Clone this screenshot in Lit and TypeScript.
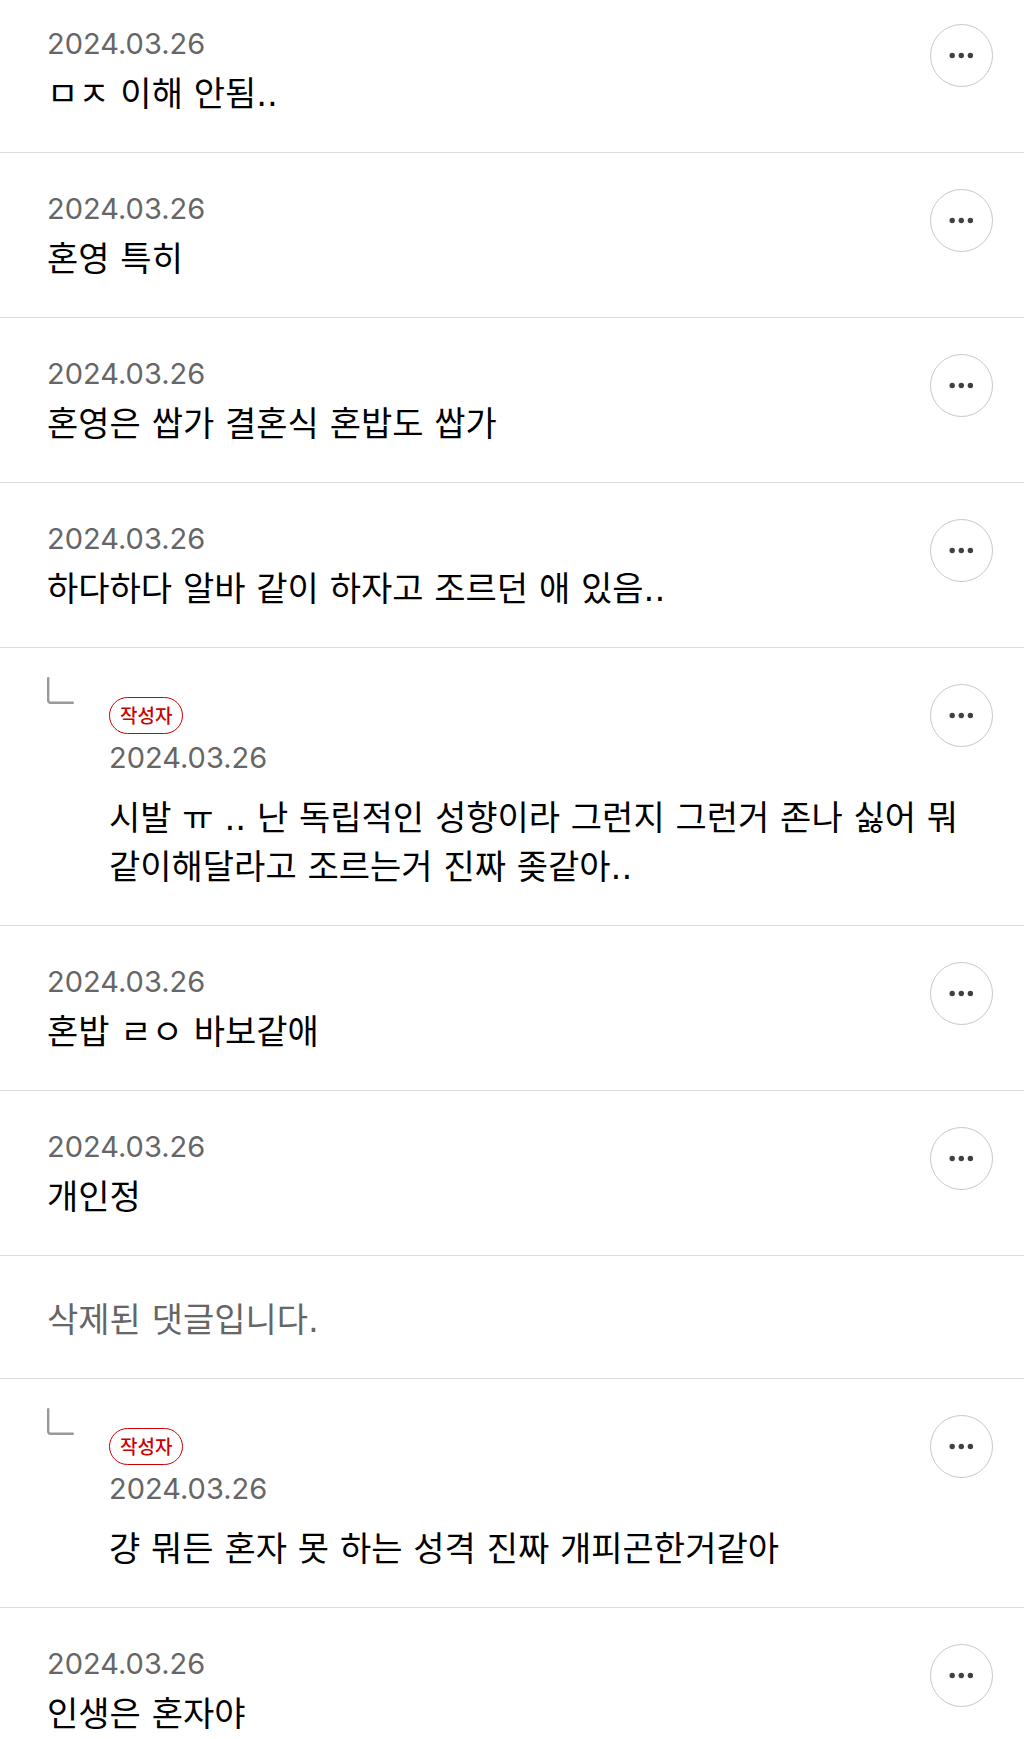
import { LitElement, html, css, nothing } from "lit";
import { customElement } from "lit/decorators.js";

interface Comment {
  date?: string;
  text: string;
  reply?: boolean;
  deleted?: boolean;
}

const comments: Comment[] = [
  { date: "2024.03.26", text: "ㅁㅈ 이해 안됨.." },
  { date: "2024.03.26", text: "혼영 특히" },
  { date: "2024.03.26", text: "혼영은 쌉가 결혼식 혼밥도 쌉가" },
  { date: "2024.03.26", text: "하다하다 알바 같이 하자고 조르던 애 있음.." },
  { date: "2024.03.26", text: "시발 ㅠ .. 난 독립적인 성향이라 그런지 그런거 존나 싫어 뭐 같이해달라고 조르는거 진짜 좆같아..", reply: true },
  { date: "2024.03.26", text: "혼밥 ㄹㅇ 바보같애" },
  { date: "2024.03.26", text: "개인정" },
  { text: "삭제된 댓글입니다.", deleted: true },
  { date: "2024.03.26", text: "걍 뭐든 혼자 못 하는 성격 진짜 개피곤한거같아", reply: true },
  { date: "2024.03.26", text: "인생은 혼자야" },
];

@customElement("app-root")
export class AppRoot extends LitElement {
  static styles = css`
    :host {
      display: block;
      background: #fff;
      color: #000;
      font-family: Inter, "Noto Sans CJK KR", sans-serif;
    }
    .list {
      margin: 0;
      padding: 0;
      list-style: none;
    }
    .item {
      display: flex;
      align-items: flex-start;
      padding: 36px 31px 33px 47px;
      border-bottom: 1px solid #dedede;
    }
    .item:first-child {
      padding-top: 24px;
    }
    .item:last-child {
      padding-bottom: 0;
      border-bottom: 0;
    }
    .body {
      flex: 1;
      min-width: 0;
    }
    .date {
      display: block;
      font-size: 29px;
      line-height: 40px;
      color: #666;
    }
    .text {
      margin: 6px 0 0;
      font-family: "DejaVu Sans", "Noto Sans CJK KR", sans-serif;
      font-size: 34px;
      line-height: 49px;
      word-break: keep-all;
    }
    .more {
      flex: none;
      display: grid;
      place-items: center;
      width: 63px;
      height: 63px;
      /* long comment lines may run in below the button */
      margin-left: -36px;
      padding: 0;
      border: 1px solid #c8c8c8;
      border-radius: 50%;
      background: #fff;
      cursor: pointer;
    }
    .dots {
      display: block;
      width: 25px;
      height: 7px;
      fill: #404040;
    }
    .item.deleted {
      padding-top: 40px;
    }
    .deleted .text {
      margin: 0;
      color: #666;
    }
    .branch {
      flex: none;
      width: 27px;
      height: 27px;
      margin: -7px 35px 0 0;
      fill: none;
      stroke: #999;
      stroke-width: 2.4;
      stroke-linecap: round;
    }
    .reply .body {
      padding-top: 13px;
    }
    .badge {
      display: block;
      width: fit-content;
      margin-bottom: 4px;
      padding: 2px 10px 0;
      border: 1px solid #c00;
      border-radius: 19px;
      font-size: 19px;
      font-weight: 500;
      line-height: 33px;
      color: #c00;
    }
    .reply .text {
      margin-top: 16px;
    }
  `;

  private row(c: Comment) {
    return html`<li class="item ${c.reply ? "reply" : ""} ${c.deleted ? "deleted" : ""}">
      ${c.reply
        ? html`<svg class="branch" viewBox="0 0 27 27" aria-hidden="true"><path d="M1.2 1.2V23.3Q1.2 25.8 3.7 25.8H25.8" /></svg>`
        : nothing}
      <div class="body">
        ${c.reply ? html`<span class="badge">작성자</span>` : nothing}
        ${c.date ? html`<time class="date">${c.date}</time>` : nothing}
        <p class="text">${c.text}</p>
      </div>
      ${c.deleted
        ? nothing
        : html`<button class="more" type="button" aria-label="더보기">
            <svg class="dots" viewBox="0 0 25 7"><circle cx="3.2" cy="3.5" r="2.7" /><circle cx="12.3" cy="3.5" r="2.7" /><circle cx="21.4" cy="3.5" r="2.7" /></svg>
          </button>`}
    </li>`;
  }

  render() {
    return html`<ul class="list">${comments.map((c) => this.row(c))}</ul>`;
  }
}
